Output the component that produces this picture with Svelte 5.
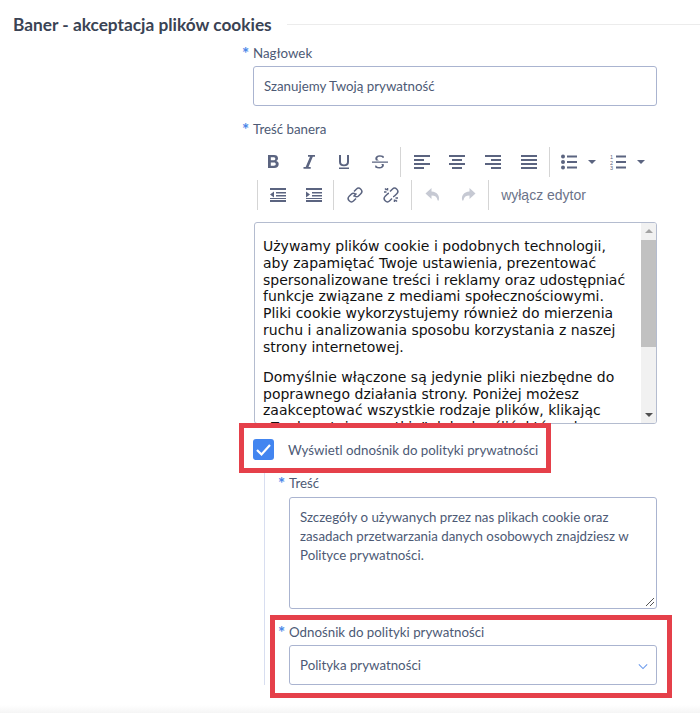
<script>
  let body = [
    'Używamy plików cookie i podobnych technologii, aby zapamiętać Twoje ustawienia, prezentować spersonalizowane treści i reklamy oraz udostępniać funkcje związane z mediami społecznościowymi. Pliki cookie wykorzystujemy również do mierzenia ruchu i analizowania sposobu korzystania z naszej strony internetowej.',
    'Domyślnie włączone są jedynie pliki niezbędne do poprawnego działania strony. Poniżej możesz zaakceptować wszystkie rodzaje plików, klikając „Zaakceptuj wszystkie”, lub określić, które chcesz włączyć.'
  ];
  let policy = 'Szczegóły o używanych przez nas plikach cookie oraz zasadach przetwarzania danych osobowych znajdziesz w Polityce prywatności.';
</script>

<main class="page">
  <div class="heading">
    <h2>Baner - akceptacja plików cookies</h2>
    <span class="rule"></span>
  </div>

  <div class="form">
    <div class="field">
      <label class="label"><span class="star">*</span>Nagłowek</label>
      <div class="input">Szanujemy Twoją prywatność</div>
    </div>

    <div class="field editor-field">
      <label class="label"><span class="star">*</span>Treść banera</label>
      <div class="toolbar">
        <div class="tool-row first">
          <button class="tool"><svg viewBox="0 0 16 16"><path d="M3 1h6c2.700 0 4 1.200 4 3.300 0 1.300-.7 2.300-1.800 2.700 1.600.4 2.500 1.500 2.500 3.100 0 2.600-1.700 3.900-4.500 3.900H3zm2.800 2.300v3h2.600c1.200 0 1.900-.5 1.900-1.500s-.7-1.500-1.900-1.500zm0 5.200v3.200h3c1.300 0 2-.6 2-1.600s-.7-1.600-2-1.600z"/></svg></button>
          <button class="tool"><svg viewBox="0 0 16 16"><path d="M7 1h7v1.800h-2.200L7.500 13h2.200v1.800H2.500V13h2.200L9 2.800H7z"/></svg></button>
          <button class="tool"><svg viewBox="0 0 16 16"><path d="M3 1h2v6.800c0 1.800 1.100 2.700 3 2.700s3-.9 3-2.700V1h2v6.900c0 2.900-1.900 4.300-5 4.300s-5-1.400-5-4.300zM3 13.500h10V15H3z"/></svg></button>
          <button class="tool"><svg viewBox="0 0 16 16"><path d="M0 7.500h16v1.200H0zM4 6.500C3.500 6 3.300 5.300 3.300 4.500c0-2 1.700-3.300 4.500-3.300 1.500 0 2.800.3 3.900.8v2h-.9C10.300 3.200 9.300 2.800 7.900 2.800c-1.600 0-2.600.6-2.600 1.600 0 .9.800 1.600 2 2.100zm7.500 3.500c.2.400.4.800.4 1.300 0 2-1.700 3.200-4.500 3.200-1.500 0-3-.4-4.200-1v-2.100h1c.6 1 1.900 1.600 3.300 1.600 1.600 0 2.500-.6 2.500-1.500 0-.6-.3-1.100-.8-1.500z"/></svg></button>
          <span class="sep"></span>
          <button class="tool"><svg viewBox="0 0 16 16"><path d="M0 1h16v2H0zM0 5h10v2H0zM0 9h16v2H0zM0 13h10v2H0z"/></svg></button>
          <button class="tool"><svg viewBox="0 0 16 16"><path d="M0 1h16v2H0zM3 5h10v2H3zM0 9h16v2H0zM3 13h10v2H3z"/></svg></button>
          <button class="tool"><svg viewBox="0 0 16 16"><path d="M0 1h16v2H0zM6 5h10v2H6zM0 9h16v2H0zM6 13h10v2H6z"/></svg></button>
          <button class="tool"><svg viewBox="0 0 16 16"><path d="M0 1h16v2H0zM0 5h16v2H0zM0 9h16v2H0zM0 13h16v2H0z"/></svg></button>
          <span class="sep"></span>
          <button class="tool wide"><svg viewBox="0 0 16 16"><circle cx="2" cy="2.500" r="2"/><circle cx="2" cy="8" r="2"/><circle cx="2" cy="13.500" r="2"/><path d="M6 1.500h10v2H6zM6 7h10v2H6zM6 12.500h10v2H6z"/></svg><i class="caret"></i></button>
          <button class="tool wide"><svg viewBox="0 0 16 16"><path d="M6 1.500h10v2H6zM6 7h10v2H6zM6 12.500h10v2H6z"/><text x="0" y="5" class="nums">1</text><text x="0" y="10.500" class="nums">2</text><text x="0" y="16" class="nums">3</text></svg><i class="caret"></i></button>
        </div>
        <div class="tool-row second">
          <span class="sep"></span>
          <button class="tool"><svg viewBox="0 0 16 16"><path d="M0 1h16v2H0zM6 5h10v1.500H6zM6 8h10v1.500H6zM0 13h16v2H0zM0 11h16v1H0zM4 4.500v6L0 7.500z"/></svg></button>
          <button class="tool"><svg viewBox="0 0 16 16"><path d="M0 1h16v2H0zM6 5h10v1.500H6zM6 8h10v1.500H6zM0 13h16v2H0zM0 11h16v1H0zM0 4.500v6l4-3z"/></svg></button>
          <span class="sep"></span>
          <button class="tool"><svg viewBox="0 0 16 16" class="line"><path d="M6.500 9.500 9.500 6.500M7 4.500l2.300-2.300a2.600 2.600 0 0 1 4.500 4.500L11.500 9a2.600 2.600 0 0 1-3.700 0M9 11.500l-2.300 2.300a2.600 2.600 0 0 1-4.500-4.500L4.500 7a2.600 2.600 0 0 1 3.700 0"/></svg></button>
          <button class="tool"><svg viewBox="0 0 16 16" class="line"><path d="M7 4.500l2.300-2.300a2.600 2.600 0 0 1 4.500 4.500L11.500 9a2.600 2.600 0 0 1-1.500.7M9 11.500l-2.300 2.300a2.600 2.600 0 0 1-4.500-4.500L4.500 7a2.600 2.600 0 0 1 1.500-.7M1 5h2.500M4.500 1v2.500M15 11h-2.500M11.500 15v-2.500M2 1.500l1.500 1.500M14 14.500 12.500 13"/></svg></button>
          <span class="sep"></span>
          <button class="tool off"><svg viewBox="0 0 16 16"><path d="M6.500 1 .5 6.500l6 5.500V8.500c3.500 0 5.500 1.200 6 4.500.3.800 1 .9 1.300 0 1-4-1.300-8-7.300-8.500z"/></svg></button>
          <button class="tool off"><svg viewBox="0 0 16 16"><path d="M9.500 1l6 5.500-6 5.500V8.500c-3.500 0-5.500 1.200-6 4.500-.3.800-1 .9-1.300 0-1-4 1.300-8 7.300-8.500z"/></svg></button>
          <span class="sep"></span>
          <button class="toggle">wyłącz edytor</button>
        </div>
      </div>
      <div class="editor">
        <div class="editor-text">
          {#each body as para}
            <p>{para}</p>
          {/each}
        </div>
        <div class="scrollbar">
          <i class="arrow up"></i>
          <span class="thumb"></span>
          <i class="arrow down"></i>
        </div>
      </div>
    </div>

    <div class="check-row">
      <span class="checkbox"><svg viewBox="0 0 21 21"><path d="M4 11 8.500 15.500 17 6"/></svg></span>
      <span class="check-label">Wyświetl odnośnik do polityki prywatności</span>
      <span class="mark mark-check"></span>
    </div>

    <div class="nested">
      <div class="field">
        <label class="label"><span class="star">*</span>Treść</label>
        <div class="textarea">
          {policy}
          <svg class="grip" viewBox="0 0 10 10"><path d="M1 9 9 1M5 9l4-4"/></svg>
        </div>
      </div>
      <div class="field link-field">
        <label class="label"><span class="star">*</span>Odnośnik do polityki prywatności</label>
        <div class="input select">
          Polityka prywatności
          <svg class="chev" viewBox="0 0 12 8"><path d="M1 1.500 6 6.500 11 1.500"/></svg>
        </div>
        <span class="mark mark-link"></span>
      </div>
    </div>
  </div>
  <div class="footer"></div>
</main>

<style>
  :global(body) {
    background: #fff;
  }

  .page {
    width: 700px;
    height: 723px;
    overflow: hidden;
    box-sizing: border-box;
    padding-top: 12px;
    font-family: Lato, "Noto Sans", sans-serif;
    font-size: 13.300px;
    color: #4d5a75;
  }

  /* Section heading */
  .heading {
    display: flex;
    align-items: center;
    gap: 15px;
    padding-left: 13px;
    height: 24px;
  }

  h2 {
    margin: 0;
    font-size: 17.300px;
    font-weight: 700;
    color: #3a4354;
    white-space: nowrap;
  }

  .rule {
    flex: 1;
    height: 1px;
    background: #ececec;
  }

  /* Form */
  .form {
    margin-left: 253px;
    width: 404px;
    padding-top: 7px;
  }

  .label {
    display: block;
    position: relative;
    height: 20px;
    line-height: 20px;
  }

  .star {
    position: absolute;
    left: -11px;
    top: 1px;
    color: #4a86e8;
    font-size: 17px;
    font-weight: 700;
  }

  .input {
    box-sizing: border-box;
    height: 40px;
    line-height: 38px;
    padding: 0 10px;
    border: 1px solid #aab4d0;
    border-radius: 3px;
    background: #fff;
    margin-top: 3px;
  }

  .editor-field {
    margin-top: 13px;
  }

  /* Toolbar */
  .toolbar {
    margin-top: 8px;
  }

  .tool-row {
    display: flex;
    align-items: center;
    height: 30px;
    margin-bottom: 3px;
    margin-left: 2px;
  }

  .tool-row.second {
    margin-left: 4px;
  }

  .tool {
    width: 35.700px;
    height: 30px;
    padding: 0;
    border: 0;
    background: none;
    display: flex;
    align-items: center;
    justify-content: center;
    gap: 11px;
  }

  .tool.wide {
    width: 49px;
    padding-left: 8px;
    justify-content: flex-start;
  }

  .tool svg {
    width: 16px;
    height: 16px;
    fill: #5b6480;
    flex: none;
  }

  .tool svg.line {
    fill: none;
    stroke: #5b6480;
    stroke-width: 1.500;
  }

  .tool.off svg {
    fill: #c6c9d3;
  }

  .nums {
    font-size: 5.500px;
    font-family: "Liberation Sans", sans-serif;
  }

  .caret {
    flex: none;
    width: 0;
    height: 0;
    border-left: 4px solid transparent;
    border-right: 4px solid transparent;
    border-top: 4px solid #5b6480;
  }

  .sep {
    width: 1px;
    height: 30px;
    background: #d5d5d5;
    margin: 0 3px 0 2px;
    flex: none;
  }

  .tool-row.second .sep:first-child {
    margin: 0 2px 0 0;
  }

  .toggle {
    padding: 0 9px;
    border: 0;
    background: none;
    color: #6b7389;
    font-family: "Liberation Sans", sans-serif;
    font-size: 14px;
  }

  /* Editor */
  .editor {
    display: flex;
    box-sizing: border-box;
    height: 202px;
    margin-top: 12px;
    margin-left: 1px;
    border: 1px solid #b4bccf;
    border-radius: 3px;
    overflow: hidden;
  }

  .editor-text {
    flex: 1;
    padding: 15px 8px 0 8px;
    font-family: "DejaVu Sans", sans-serif;
    font-size: 14px;
    line-height: 16.800px;
    color: #111;
    overflow: hidden;
  }

  .editor-text p {
    margin: 0 0 13.200px;
  }

  .scrollbar {
    width: 15px;
    flex: none;
    background: #f1f1f1;
    display: flex;
    flex-direction: column;
    align-items: center;
  }

  .arrow {
    flex: none;
    width: 0;
    height: 0;
    border-left: 4px solid transparent;
    border-right: 4px solid transparent;
  }

  .arrow.up {
    margin: 6px 0 7px;
    border-bottom: 4px solid #a3a3a3;
  }

  .arrow.down {
    margin: auto 0 6px;
    border-top: 4px solid #505050;
  }

  .thumb {
    width: 100%;
    height: 107px;
    background: #c1c1c1;
  }

  /* Checkbox row */
  .check-row {
    position: relative;
    display: flex;
    align-items: center;
    box-sizing: border-box;
    height: 49px;
    padding-top: 2px;
  }

  .checkbox {
    width: 21px;
    height: 21px;
    border-radius: 3px;
    background: #4285f0;
    flex: none;
  }

  .checkbox svg {
    display: block;
    fill: none;
    stroke: #fff;
    stroke-width: 2.200;
  }

  .check-label {
    margin-left: 14px;
    white-space: nowrap;
  }

  /* Annotation boxes */
  .mark {
    position: absolute;
    box-sizing: border-box;
    border: 5px solid #e5404a;
    pointer-events: none;
  }

  .mark-check {
    left: -14px;
    top: -1px;
    width: 312px;
    height: 50px;
  }

  .mark-link {
    left: -19px;
    top: -7px;
    width: 402px;
    height: 83px;
  }

  /* Nested block */
  .nested {
    margin-left: 11px;
    padding-left: 24px;
    border-left: 1px solid #d8def0;
    height: 212px;
  }

  .textarea {
    position: relative;
    box-sizing: border-box;
    height: 112px;
    margin-top: 4px;
    padding: 10px;
    line-height: 19px;
    border: 1px solid #aab4d0;
    border-radius: 3px;
  }

  .grip {
    position: absolute;
    right: 1px;
    bottom: 1px;
    width: 10px;
    height: 10px;
    stroke: #555;
    fill: none;
  }

  .field {
    position: relative;
  }

  .link-field {
    margin-top: 13px;
  }

  .select {
    position: relative;
  }

  .chev {
    position: absolute;
    right: 8px;
    top: 17px;
    width: 10px;
    height: 7px;
    fill: none;
    stroke: #6d9bec;
    stroke-width: 1.300;
  }

  .footer {
    height: 8px;
    margin-top: 20px;
    background: linear-gradient(#fff, #f5f5f5);
  }
</style>
